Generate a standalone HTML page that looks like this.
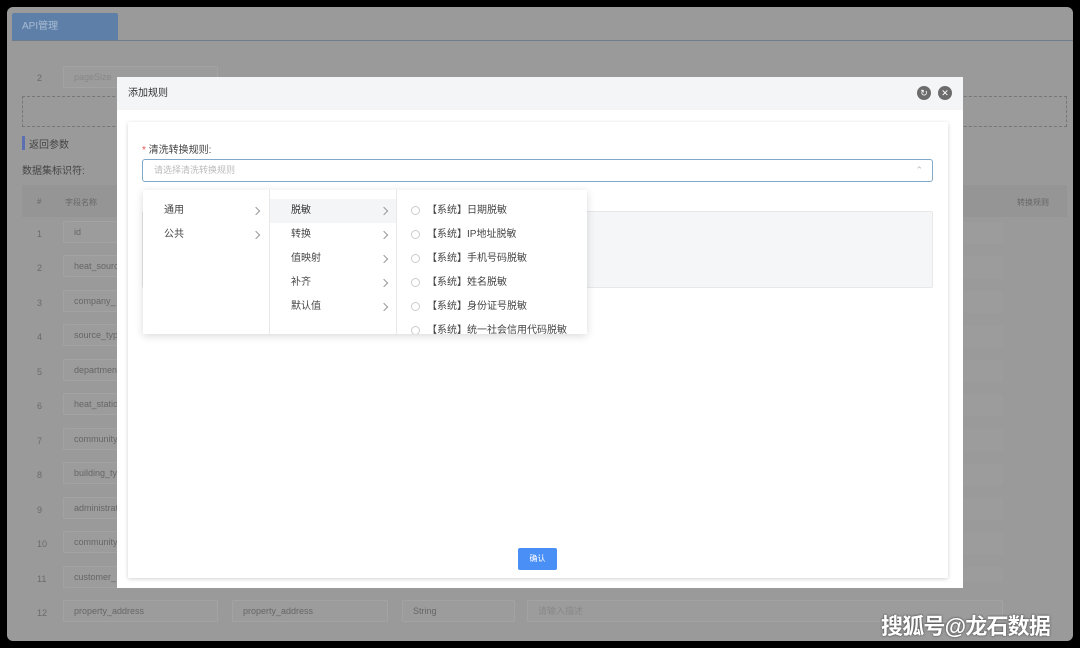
<!DOCTYPE html>
<html><head><meta charset="utf-8"><style>
*{box-sizing:border-box;margin:0;padding:0}
body{width:1080px;height:648px;background:#000;position:relative;overflow:hidden;font-family:"Liberation Sans","Noto Sans CJK SC",sans-serif}
.page{position:absolute;left:7px;top:7px;width:1066px;height:634px;background:#9a9a9a;border-radius:6px;overflow:hidden}
.tab{position:absolute;left:5px;top:6px;width:106px;height:28px;background:#5d7fa8;color:#a9bcd3;font-size:10px;line-height:28px;padding-left:10px;border-radius:2px 2px 0 0}
.tabline{position:absolute;left:5px;top:33px;right:0;height:1px;background:#6e7c8d}
.a{position:absolute}
.num{position:absolute;left:30px;font-size:9px;color:#6a6a6a}
.inp{position:absolute;height:22px;border:1px solid #a3a3a3;border-radius:2px;background:#9c9c9c;font-size:9px;color:#666;line-height:20px;padding-left:10px}
.modal{position:absolute;left:117px;top:77px;width:846px;height:511px;background:#fff}
.mh{height:33px;background:#f4f5f7;font-size:10px;color:#333;line-height:33px;padding-left:11px}
.ic{position:absolute;top:9px;width:14px;height:14px;border-radius:50%;background:#6c6c6c;color:#fff;font-size:9px;text-align:center;line-height:14px}
.card{position:absolute;left:11px;top:45px;width:820px;height:456px;background:#fff;box-shadow:0 1px 4px rgba(0,0,0,.18);border-radius:2px}
.dd{position:absolute;left:143px;top:190px;width:444px;height:144px;background:#fff;box-shadow:0 2px 8px rgba(0,0,0,.15);font-size:10px;color:#444}
.col{position:absolute;top:0;height:144px;border-right:1px solid #e8e8e8}
.it{position:absolute;height:24px;line-height:24px}
.ar{position:absolute;width:6px;height:6px;border-right:1px solid #999;border-top:1px solid #999;transform:rotate(45deg)}
.rd{position:absolute;left:14px;width:9px;height:9px;border:1px solid #ccc;border-radius:50%}
</style></head><body>
<div class="page">
<div class="tab">API管理</div><div class="tabline"></div>
<div class="num" style="top:66px">2</div>
<div class="inp" style="left:56px;top:59px;width:155px;color:#888">pageSize</div>
<div class="a" style="left:15px;top:89px;width:1045px;height:31px;border:1px dashed #777"></div>
<div class="a" style="left:15px;top:129px;width:3px;height:14px;background:#5c6fb0"></div>
<div class="a" style="left:22px;top:129px;font-size:10px;color:#444">返回参数</div>
<div class="a" style="left:15px;top:155px;font-size:10px;color:#444">数据集标识符:</div>
<div class="a" style="left:15px;top:178px;width:1045px;height:32px;background:#959595"></div>
<div class="a" style="left:30px;top:190px;font-size:8px;color:#666">#</div>
<div class="a" style="left:58px;top:190px;font-size:8px;color:#666">字段名称</div>
<div class="a" style="left:1010px;top:190px;font-size:8px;color:#666">转换规则</div>
<div class="num" style="top:222px">1</div><div class="inp" style="left:56px;top:214px;width:155px">id</div>
<div class="num" style="top:256px">2</div><div class="inp" style="left:56px;top:248px;width:155px">heat_source</div>
<div class="num" style="top:291px">3</div><div class="inp" style="left:56px;top:283px;width:155px">company_</div>
<div class="num" style="top:325px">4</div><div class="inp" style="left:56px;top:317px;width:155px">source_type</div>
<div class="num" style="top:360px">5</div><div class="inp" style="left:56px;top:352px;width:155px">department</div>
<div class="num" style="top:394px">6</div><div class="inp" style="left:56px;top:386px;width:155px">heat_station</div>
<div class="num" style="top:429px">7</div><div class="inp" style="left:56px;top:421px;width:155px">community</div>
<div class="num" style="top:463px">8</div><div class="inp" style="left:56px;top:455px;width:155px">building_type</div>
<div class="num" style="top:498px">9</div><div class="inp" style="left:56px;top:490px;width:155px">administrative</div>
<div class="num" style="top:532px">10</div><div class="inp" style="left:56px;top:524px;width:155px">community</div>
<div class="num" style="top:567px">11</div><div class="inp" style="left:56px;top:559px;width:155px">customer_</div>
<div class="num" style="top:601px">12</div><div class="inp" style="left:56px;top:593px;width:155px">property_address</div>
<div class="inp" style="left:225px;top:593px;width:156px">property_address</div>
<div class="inp" style="left:395px;top:593px;width:113px">String</div>
<div class="inp" style="left:520px;top:593px;width:476px;color:#888">请输入描述</div>
<div class="a" style="left:956px;top:215px;width:40px;height:360px;background:repeating-linear-gradient(#9c9c9c 0 22px,transparent 22px 34.5px)"></div>
</div>
<div class="modal">
<div class="mh">添加规则</div>
<div class="ic" style="left:800px">↻</div><div class="ic" style="left:821px">✕</div>
<div class="card"></div>
</div>
<div class="a" style="left:142px;top:141px;font-size:10px;color:#444"><span style="color:#e55">*</span> 清洗转换规则:</div>
<div class="a" style="left:142px;top:159px;width:791px;height:23px;border:1px solid #7fa8c9;border-radius:3px;font-size:9px;color:#bbb;line-height:21px;padding-left:11px">请选择清洗转换规则<span style="position:absolute;right:9px;color:#bbb">⌃</span></div>
<div class="a" style="left:142px;top:211px;width:791px;height:77px;background:#f5f6f8;border:1px solid #e8e8e8;border-radius:2px"></div>
<div class="dd">
<div class="col" style="left:0;width:127px">
<div class="it" style="left:21px;top:9px">通用</div><div class="ar" style="left:110px;top:18px"></div>
<div class="it" style="left:21px;top:33px">公共</div><div class="ar" style="left:110px;top:42px"></div></div>
<div class="col" style="left:127px;width:127px">
<div class="a" style="left:0;top:9px;width:126px;height:24px;background:#f4f5f7"></div>
<div class="it" style="left:21px;top:9px;color:#333">脱敏</div><div class="ar" style="left:111px;top:18px"></div>
<div class="it" style="left:21px;top:33px">转换</div><div class="ar" style="left:111px;top:42px"></div>
<div class="it" style="left:21px;top:57px">值映射</div><div class="ar" style="left:111px;top:66px"></div>
<div class="it" style="left:21px;top:81px">补齐</div><div class="ar" style="left:111px;top:90px"></div>
<div class="it" style="left:21px;top:105px">默认值</div><div class="ar" style="left:111px;top:114px"></div></div>
<div class="col" style="left:254px;width:190px;border:none;overflow:hidden">
<div class="rd" style="top:16px"></div><div class="it" style="left:30px;top:9px">【系统】日期脱敏</div>
<div class="rd" style="top:40px"></div><div class="it" style="left:30px;top:33px">【系统】IP地址脱敏</div>
<div class="rd" style="top:64px"></div><div class="it" style="left:30px;top:57px">【系统】手机号码脱敏</div>
<div class="rd" style="top:88px"></div><div class="it" style="left:30px;top:81px">【系统】姓名脱敏</div>
<div class="rd" style="top:112px"></div><div class="it" style="left:30px;top:105px">【系统】身份证号脱敏</div>
<div class="rd" style="top:136px"></div><div class="it" style="left:30px;top:129px">【系统】统一社会信用代码脱敏</div></div>
</div>
<div class="a" style="left:518px;top:548px;width:39px;height:22px;background:#4a8ff5;border-radius:2px;color:#fff;font-size:8px;text-align:center;line-height:22px">确认</div>
<div class="a" style="left:881px;top:609px;font-size:22px;font-weight:bold;color:#fff;letter-spacing:-0.8px;text-shadow:0 0 2px #333">搜狐号@龙石数据</div>
</body></html>
